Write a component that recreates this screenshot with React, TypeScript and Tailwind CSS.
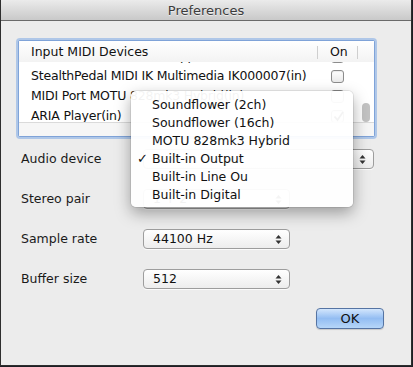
import React from "react";

const font = { fontFamily: '"DejaVu Sans", "Liberation Sans", sans-serif' };

function Stepper() {
  return (
    <svg width="7" height="11" viewBox="0 0 7 11" className="shrink-0">
      <path d="M3.5 1 L6.5 4.5 L0.5 4.5 Z" fill="#333" />
      <path d="M3.5 10 L6.5 6.5 L0.5 6.5 Z" fill="#333" />
    </svg>
  );
}

function Checkbox({ checked }: { checked?: boolean }) {
  return (
    <div className="relative w-[13px] h-[13px] rounded-[3px] border border-[#8c8c8c] bg-gradient-to-b from-white to-[#e9e9e9] shadow-[inset_0_1px_1px_rgba(0,0,0,0.08)]">
      {checked && (
        <svg width="13" height="13" viewBox="0 0 13 13" className="absolute -top-px left-0">
          <path d="M2.5 6.5 L5.5 10 L11 2" stroke="#222" strokeWidth="1.8" fill="none" />
        </svg>
      )}
    </div>
  );
}

function PopupButton({ value, width }: { value: string; width: string }) {
  return (
    <div
      className={`${width} h-[20px] flex items-center justify-between pl-[9px] pr-[7px] rounded-[4px] border border-[#9d9d9d] bg-gradient-to-b from-white to-[#ededed] shadow-[0_1px_0_rgba(255,255,255,0.8)] text-[12.5px] text-[#111]`}
    >
      <span>{value}</span>
      <Stepper />
    </div>
  );
}

const rows = [
  { name: "IAC Driver Bus 1 MIDI Support(in)", checked: false },
  { name: "StealthPedal MIDI IK Multimedia IK000007(in)", checked: false },
  { name: "MIDI Port MOTU 828mk3 Hybrid(in)", checked: false },
  { name: "ARIA Player(in)", checked: true },
];

const menuItems = [
  "Soundflower (2ch)",
  "Soundflower (16ch)",
  "MOTU 828mk3 Hybrid",
  "Built-in Output",
  "Built-in Line Ou",
  "Built-in Digital",
];

export default function App() {
  return (
    <div className="w-[413px] h-[367px] bg-[#1c1f24] overflow-hidden" style={font}>
      <div className="relative w-[412px] h-[366px] bg-[#ececec] border-x border-b border-[#2e2e2e] flex flex-col">
        {/* Title bar */}
        <div className="h-[21px] shrink-0 flex items-center justify-center pt-px bg-gradient-to-b from-[#ebebeb] to-[#c9c9c9] border-b border-[#6a6a6a] text-[13px] text-[#3c3c3c] [text-shadow:0_1px_0_rgba(255,255,255,0.6)]">
          Preferences
        </div>

        {/* MIDI device list */}
        <div className="ml-[17px] mt-[19px] w-[357px] h-[97px] rounded-[2px] border border-[#7fa3d8] shadow-[0_0_0_2px_rgba(135,175,230,0.6)] bg-white flex flex-col text-[12.5px] text-[#111]">
          <div className="h-[21px] shrink-0 flex items-center pt-[2px] bg-gradient-to-b from-white to-[#f3f3f3]">
            <div className="w-[299px] pl-[12px] border-r border-[#cfcfcf] h-[13px] flex items-center">Input MIDI Devices</div>
            <div className="w-[40px] pl-[12px] border-r border-[#cfcfcf] h-[13px] flex items-center">On</div>
          </div>
          <div className="relative h-[60px] shrink-0 overflow-hidden">
            <div className="-mt-[16px] flex flex-col">
              {rows.map((r) => (
                <div key={r.name} className="h-[20px] flex items-center">
                  <div className="w-[300px] pl-[12px] whitespace-nowrap overflow-hidden tracking-[-0.2px]">{r.name}</div>
                  <div className="w-[40px] pl-[12px]">
                    <Checkbox checked={r.checked} />
                  </div>
                </div>
              ))}
            </div>
            <div className="absolute right-[4px] top-[41px] w-[8px] h-[19px] rounded-full bg-[#c2c2c2]" />
          </div>
          <div className="flex-1 bg-[#f6f6f6] border-t border-[#dadada]" />
        </div>

        {/* Form rows */}
        <div className="mt-[12px] flex flex-col gap-[20px] pl-[20px] text-[12.5px] text-[#1a1a1a]">
          <div className="h-[20px] flex items-center">
            <div className="w-[122px]">Audio device</div>
            <PopupButton value="Built-in Output" width="w-[231px]" />
          </div>
          <div className="h-[20px] flex items-center">
            <div className="w-[122px]">Stereo pair</div>
            <PopupButton value="1 + 2" width="w-[147px]" />
          </div>
          <div className="h-[20px] flex items-center">
            <div className="w-[122px]">Sample rate</div>
            <PopupButton value="44100 Hz" width="w-[147px]" />
          </div>
          <div className="h-[20px] flex items-center">
            <div className="w-[122px]">Buffer size</div>
            <PopupButton value="512" width="w-[147px]" />
          </div>
        </div>

        {/* OK button */}
        <div className="mt-[19px] flex justify-end pr-[27px]">
          <button className="w-[68px] h-[21px] rounded-[4px] border border-[#5574a3] bg-gradient-to-b from-[#d3e6fc] via-[#93bdf2] to-[#b6d6f8] text-[13px] text-[#111] shadow-[0_1px_1px_rgba(0,0,0,0.15)]">
            OK
          </button>
        </div>

        {/* Open popup menu */}
        <div className="absolute left-[130px] top-[91px] w-[222px] pt-[5px] pb-[3px] rounded-[5px] bg-white/95 shadow-[0_6px_16px_rgba(0,0,0,0.35),0_0_0_1px_rgba(0,0,0,0.08)] text-[12.5px] text-[#111]">
          {menuItems.map((m) => (
            <div key={m} className="h-[18px] flex items-center">
              <div className="w-[21px] pl-[6px] text-[13px]">{m === "Built-in Output" ? "✓" : ""}</div>
              <div>{m}</div>
            </div>
          ))}
        </div>
      </div>
    </div>
  );
}
